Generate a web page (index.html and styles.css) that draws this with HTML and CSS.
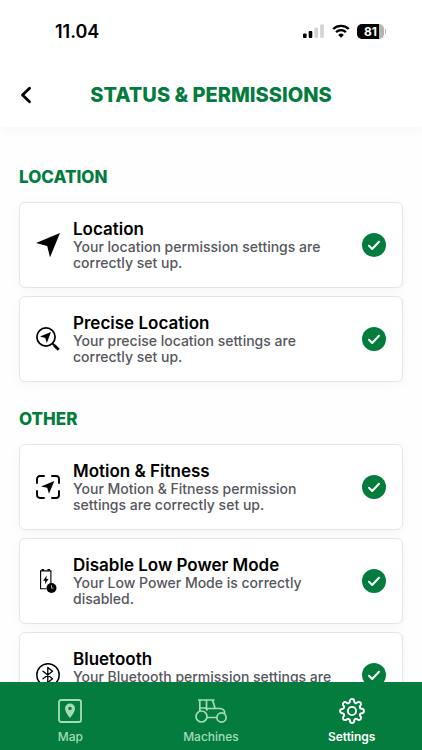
FILE: index.html
```html
<!DOCTYPE html>
<html lang="en">
<head>
    <meta charset="UTF-8">
    <meta name="viewport" content="width=device-width, initial-scale=1.0">
    <title>Status &amp; Permissions</title>
    <link rel="stylesheet" href="styles.css">
</head>
<body>
    <svg class="sprite" aria-hidden="true">
        <symbol id="check" viewBox="0 0 24 24">
            <circle cx="12" cy="12" r="12" fill="#047c3d"/>
            <path d="M7 12.8l3.2 3.2L17 8.8" fill="none" stroke="#fff" stroke-width="2" stroke-linecap="round" stroke-linejoin="round"/>
        </symbol>
    </svg>

    <header class="header">
        <div class="status-bar">
            <span class="time">11.04</span>
            <div class="status-icons">
                <svg width="22" height="14" viewBox="0 0 22 14">
                    <rect x="0" y="9.5" width="3.6" height="4.5" rx="1"/>
                    <rect x="5.7" y="7" width="3.6" height="7" rx="1"/>
                    <rect x="11.4" y="3.5" width="3.6" height="10.500" rx="1" fill="#d2d2d2"/>
                    <rect x="17.2" y="0.5" width="3.6" height="13.500" rx="1" fill="#d2d2d2"/>
                </svg>
                <svg width="18" height="14" viewBox="0 0 18 14">
                    <path d="M1.2 5a11.3 11.3 0 0 1 15.6 0M4.1 8.1a7 7 0 0 1 9.8 0" fill="none" stroke="#000" stroke-width="2.4"/>
                    <path d="M9 13.8l-2.8-2.9a4 4 0 0 1 5.6 0z"/>
                </svg>
                <div class="battery"><span class="battery-level">81</span></div>
            </div>
        </div>
        <div class="title-bar">
            <button class="back" type="button" aria-label="Back">
                <svg width="12" height="18" viewBox="0 0 12 18"><path d="M9.5 2.2L2.5 9l7 6.8" fill="none" stroke="#000" stroke-width="2.8" stroke-linecap="round" stroke-linejoin="round"/></svg>
            </button>
            <h1>STATUS &amp; PERMISSIONS</h1>
        </div>
    </header>

    <main class="content">
        <section>
            <h2>LOCATION</h2>
            <div class="card">
                <svg class="card-icon" viewBox="0 0 24 24"><path d="M24 0L14 24.3 11.2 13 0 10z"/></svg>
                <div class="card-text">
                    <h3>Location</h3>
                    <p>Your location permission settings are correctly set up.</p>
                </div>
                <svg class="check"><use href="#check"/></svg>
            </div>
            <div class="card">
                <svg class="card-icon" viewBox="0 0 24 24">
                    <circle cx="10" cy="10" r="9.1" fill="none" stroke="#000" stroke-width="1.7"/>
                    <path d="M16.8 16.8l1.5 1.5" stroke="#000" stroke-width="2"/>
                    <path d="M18.2 18.2l4.5 4.5" stroke="#000" stroke-width="2.8"/>
                    <path d="M15 5l-4.2 11-1.5-5.1L4 9.5z"/>
                </svg>
                <div class="card-text">
                    <h3>Precise Location</h3>
                    <p>Your precise location settings are correctly set up.</p>
                </div>
                <svg class="check"><use href="#check"/></svg>
            </div>
        </section>

        <section>
            <h2>OTHER</h2>
            <div class="card">
                <svg class="card-icon" viewBox="0 0 24 24">
                    <path d="M1 8V4a3 3 0 0 1 3-3h4M16 1h4a3 3 0 0 1 3 3v4M23 16v4a3 3 0 0 1-3 3h-4M8 23H4a3 3 0 0 1-3-3v-4" fill="none" stroke="#000" stroke-width="1.9" stroke-linecap="round"/>
                    <path d="M18.3 6L13 18.7l-1.8-5.9L5 11.4z"/>
                </svg>
                <div class="card-text">
                    <h3>Motion &amp; Fitness</h3>
                    <p>Your Motion &amp; Fitness permission settings are correctly set up.</p>
                </div>
                <svg class="check"><use href="#check"/></svg>
            </div>
            <div class="card">
                <svg class="card-icon" viewBox="0 0 24 24">
                    <path d="M10.5 19.8H4.600V1.900h10.300V15" fill="none" stroke="#000" stroke-width="1.1"/>
                    <path d="M5.500 0h2.600v1.600H5.500zM11.400 0H14v1.600h-2.600z"/>
                    <path d="M10.600 6.500L7.200 11.700h2.100l-.4 3.500 3.600-5.300h-2.100z"/>
                    <circle cx="15.500" cy="19" r="5"/>
                    <path d="M15.500 16.200v3h2" fill="none" stroke="#aaa" stroke-width="1"/>
                </svg>
                <div class="card-text">
                    <h3>Disable Low Power Mode</h3>
                    <p>Your Low Power Mode is correctly disabled.</p>
                </div>
                <svg class="check"><use href="#check"/></svg>
            </div>
            <div class="card">
                <svg class="card-icon" viewBox="0 0 24 24">
                    <circle cx="12" cy="12" r="11.2" fill="none" stroke="#000" stroke-width="1.5"/>
                    <path d="M7 8.2l9.5 7.6-4.7 3.7v-15l4.7 3.7L7 15.8" fill="none" stroke="#000" stroke-width="1.3" stroke-linejoin="round" stroke-linecap="round"/>
                </svg>
                <div class="card-text">
                    <h3>Bluetooth</h3>
                    <p>Your Bluetooth permission settings are correctly set up.</p>
                </div>
                <svg class="check"><use href="#check"/></svg>
            </div>
        </section>
    </main>

    <nav class="tab-bar">
        <a class="tab" href="#map">
            <svg width="24" height="26" viewBox="0 0 24 26">
                <rect x="1" y="2" width="22" height="22" rx="2" fill="none" stroke="currentColor" stroke-width="1.8"/>
                <path fill="currentColor" fill-rule="evenodd" d="M12 5.5A5 5 0 0 0 7 10.500c0 3.800 5 9.500 5 9.500s5-5.700 5-9.500a5 5 0 0 0-5-5zm0 3.200a1.800 1.800 0 1 1 0 3.600 1.800 1.800 0 0 1 0-3.600z"/>
            </svg>
            <span>Map</span>
        </a>
        <a class="tab" href="#machines">
            <svg width="32" height="26" viewBox="0 0 32 26" fill="none" stroke="currentColor" stroke-width="1.7">
                <circle cx="6.5" cy="18.5" r="5.5"/>
                <circle cx="26.5" cy="19.5" r="4.6"/>
                <path d="M12 19.5h10M3 2h16.500M4.800 2v11M11.500 2v8M5 10h5.500l2 2.500M17.500 2l2.500 8M11 10.500h13.500q4 0 5 3v2.500"/>
            </svg>
            <span>Machines</span>
        </a>
        <a class="tab active" href="#settings" aria-current="page">
            <svg width="28" height="26" viewBox="0 0 24 24" fill="none" stroke="currentColor" stroke-width="1.8">
                <circle cx="12" cy="12" r="3.8"/>
                <path d="M19.4 15a1.65 1.65 0 0 0 .33 1.82l.06.06a2 2 0 0 1 0 2.83 2 2 0 0 1-2.83 0l-.06-.06a1.65 1.65 0 0 0-1.82-.33 1.65 1.65 0 0 0-1 1.51V21a2 2 0 0 1-2 2 2 2 0 0 1-2-2v-.09A1.65 1.65 0 0 0 9 19.4a1.65 1.65 0 0 0-1.82.33l-.06.06a2 2 0 0 1-2.83 0 2 2 0 0 1 0-2.83l.06-.06a1.65 1.65 0 0 0 .33-1.82 1.65 1.65 0 0 0-1.51-1H3a2 2 0 0 1-2-2 2 2 0 0 1 2-2h.09A1.65 1.65 0 0 0 4.6 9a1.65 1.65 0 0 0-.33-1.82l-.06-.06a2 2 0 0 1 0-2.83 2 2 0 0 1 2.83 0l.06.06a1.65 1.65 0 0 0 1.82.33H9a1.65 1.65 0 0 0 1-1.51V3a2 2 0 0 1 2-2 2 2 0 0 1 2 2v.09a1.65 1.65 0 0 0 1 1.51 1.65 1.65 0 0 0 1.82-.33l.06-.06a2 2 0 0 1 2.83 0 2 2 0 0 1 0 2.83l-.06.06a1.65 1.65 0 0 0-.33 1.82V9a1.65 1.65 0 0 0 1.51 1H21a2 2 0 0 1 2 2 2 2 0 0 1-2 2h-.09a1.65 1.65 0 0 0-1.51 1z"/>
            </svg>
            <span>Settings</span>
        </a>
    </nav>
</body>
</html>
```

FILE: styles.css
```css
* {
    box-sizing: border-box;
}
body {
    display: flex;
    flex-direction: column;
    height: 100vh;
    margin: 0;
    font-family: Inter, "Liberation Sans", sans-serif;
    background: #fefefe;
    color: #000;
}
h1, h2, h3, p {
    margin: 0;
}
.sprite {
    display: none;
}
.header {
    flex: none;
    background: #fff;
    box-shadow: 0 4px 12px rgba(0, 0, 0, 0.03);
}
.status-bar {
    display: flex;
    align-items: center;
    justify-content: space-between;
    height: 62px;
    padding: 0 36px 0 55px;
}
.time {
    font-size: 18px;
    font-weight: 600;
}
.status-icons {
    display: flex;
    align-items: center;
    gap: 7px;
}
.battery {
    position: relative;
    width: 27px;
    height: 15px;
    margin-right: 2px;
    border-radius: 5px;
    background: linear-gradient(to right, #000 81%, #b4b4b4 81%);
    color: #fff;
    font-size: 12px;
    font-weight: 700;
    line-height: 15px;
    text-align: center;
}
.battery::after {
    content: "";
    position: absolute;
    top: 5px;
    right: -2px;
    width: 1px;
    height: 5px;
    background: #b4b4b4;
}
.title-bar {
    display: grid;
    grid-template-columns: 36px 1fr 36px;
    align-items: center;
    height: 65px;
    padding: 0 8px;
}
.back {
    display: flex;
    align-items: center;
    justify-content: center;
    height: 36px;
    padding: 0;
    border: none;
    background: none;
    cursor: pointer;
}
h1 {
    color: #047c3d;
    font-size: 20px;
    font-weight: 800;
    line-height: 24px;
    text-align: center;
}
.content {
    flex: 1;
    min-height: 0;
    padding: 40px 19px 0;
    overflow-y: auto;
    scrollbar-width: none;
}
section {
    display: flex;
    flex-direction: column;
    gap: 8px;
    margin-bottom: 27px;
}
h2 {
    margin-bottom: 6px;
    color: #047c3d;
    font-size: 17px;
    font-weight: 800;
    line-height: 21px;
}
.card {
    display: flex;
    align-items: center;
    gap: 13px;
    padding: 16px;
    border: 1px solid #e1e9e7;
    border-radius: 6px;
    background: #fff;
    box-shadow: 0 2px 12px rgba(0, 0, 0, 0.04);
}
.card-icon, .check {
    flex: none;
    width: 24px;
    height: 24px;
}
.card-text {
    flex: 1;
}
h3 {
    font-size: 17px;
    font-weight: 600;
    line-height: 20px;
}
p {
    max-width: 264px;
    color: #55575c;
    font-size: 14px;
    font-weight: 500;
    line-height: 16px;
}
.tab-bar {
    flex: none;
    display: grid;
    grid-template-columns: repeat(3, 1fr);
    height: 68px;
    padding-top: 16px;
    background: #047c3d;
}
.tab {
    display: flex;
    flex-direction: column;
    align-items: center;
    gap: 5px;
    color: #a3dcb9;
    font-size: 12px;
    font-weight: 500;
    line-height: 16px;
    text-decoration: none;
}
.tab.active {
    color: #fff;
    font-weight: 600;
}
```
